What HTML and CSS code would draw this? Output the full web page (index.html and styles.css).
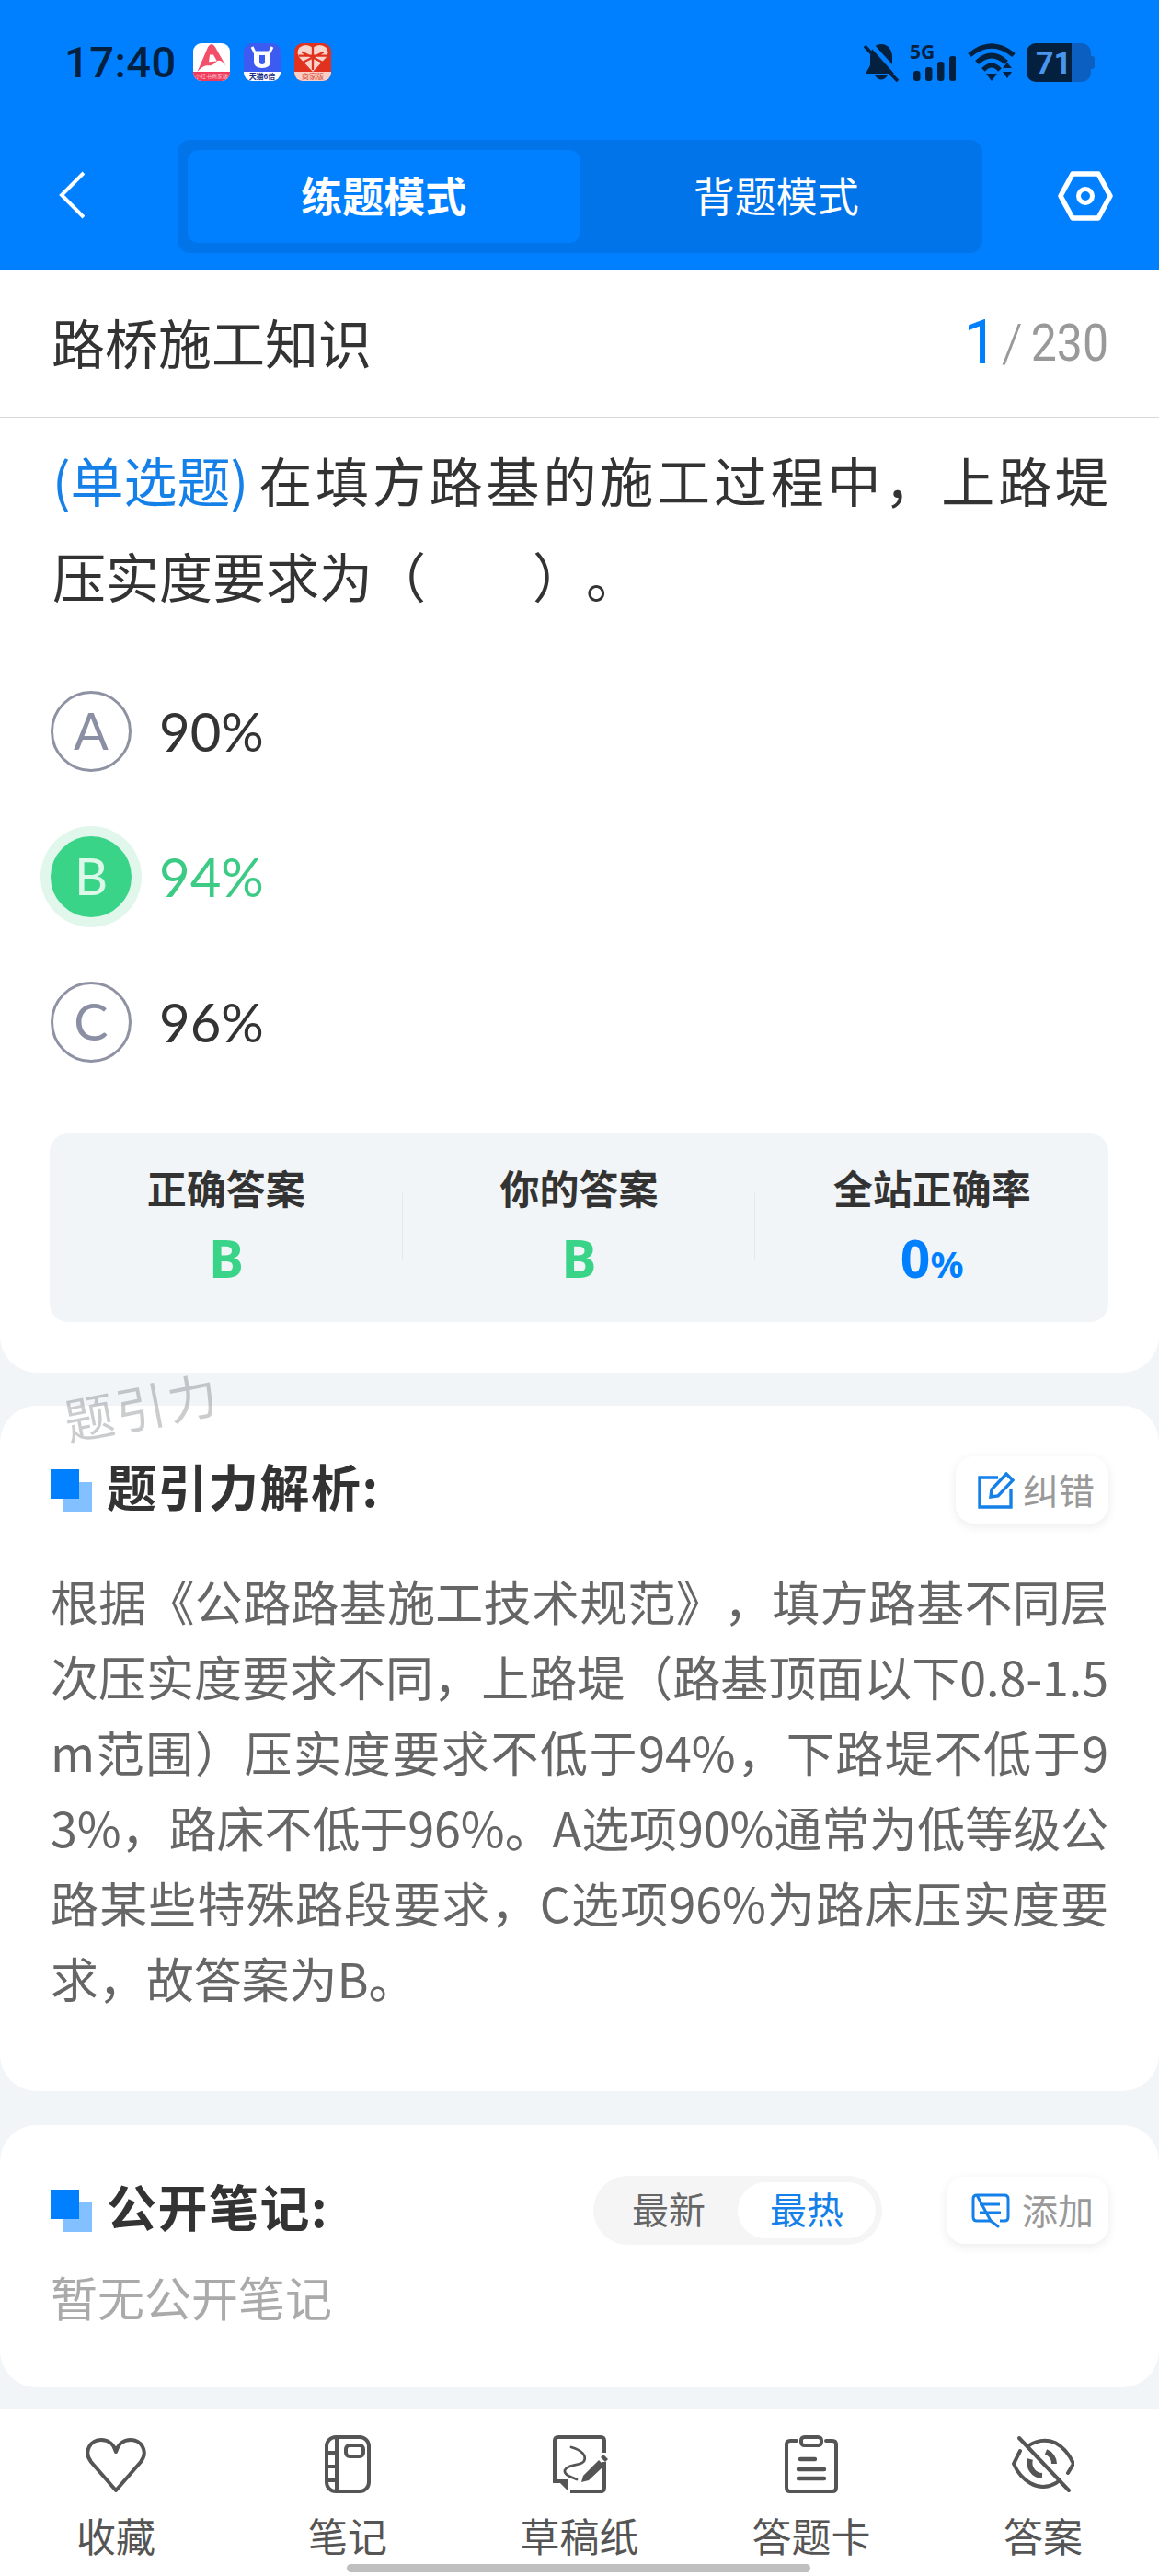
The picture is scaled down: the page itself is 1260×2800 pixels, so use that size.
FILE: index.html
```html
<!DOCTYPE html>
<html lang="zh-CN">
<head>
<meta charset="utf-8">
<title>练题模式</title>
<link rel="stylesheet" href="styles.css">
</head>
<body>
<div class="page">
  <header class="header">
    <div class="status">
      <span class="time">17:40</span>
      <div class="apps">
        <div class="app app-xhs">
          <svg viewBox="0 0 40 32" class="app-art"><path d="M4 32 L16 4 Q20 -2 24 4 L37 27 Q31 17 26 20 Q21 26 14 25 Q9 26 4 32Z" fill="#f2506a"/><path d="M18 13 L22 13 L26 20 L17 21Z" fill="#fff"/></svg>
          <span class="app-label app-label-red">小红书商家版</span>
        </div>
        <div class="app app-tm">
          <svg viewBox="0 0 40 31" class="app-art"><path d="M9 4 L12 10 H28 L31 4" fill="none" stroke="#fff" stroke-width="3"/><path d="M11 10 H29 V20 Q29 27 20 27 Q11 27 11 20Z" fill="#fff"/><path d="M17 13 H23 V20 Q23 23 20 23 Q17 23 17 20Z" fill="#3d5bf0"/></svg>
          <span class="app-label app-label-navy">天猫6倍</span>
        </div>
        <div class="app app-pdd">
          <svg viewBox="0 0 40 32" class="app-art"><path d="M20 32 L5 16 Q1 10 5 5 Q12 -1 20 5 Q28 -1 35 5 Q39 10 35 16Z" fill="#f7d5cd"/><path d="M20 2 V30 M8 10 L32 22 M32 10 L8 22 M4 14 H36" stroke="#e0321f" stroke-width="2.4"/></svg>
          <span class="app-label app-label-pink">商家版</span>
        </div>
      </div>
      <div class="sys">
        <svg class="ic-bell" viewBox="0 0 40 42"><path d="M20 1 C28 1 32 8 32 15 V24 L37 33 H3 L8 24 V15 C8 8 12 1 20 1Z" fill="#03203f"/><path d="M13 35 Q20 44 27 35Z" fill="#03203f"/><path d="M6 -2 L42 38" stroke="#0080ff" stroke-width="5"/><path d="M2 3 L38 41" stroke="#03203f" stroke-width="3.6"/></svg>
        <div class="signal">
          <span class="five-g">5G</span>
          <svg viewBox="0 0 50 42" class="ic-signal"><rect x="4" y="30" width="7.5" height="11" rx="3"/><rect x="17" y="26" width="7.5" height="15" rx="3"/><rect x="30" y="20" width="7.5" height="21" rx="3"/><rect x="43" y="14" width="7.5" height="27" rx="3"/></svg>
        </div>
        <svg class="ic-wifi" viewBox="0 0 53 42"><path d="M2 13 Q26 -7 50 13" fill="none" stroke="#03203f" stroke-width="5.5"/><path d="M10 21 Q26 6 42 21" fill="none" stroke="#03203f" stroke-width="5.5"/><path d="M17 29 Q26 19 35 29" fill="none" stroke="#03203f" stroke-width="5"/><path d="M20 33 H32 L26 41Z" fill="#03203f"/><path d="M38 27 L43 21 L48 27ZM38 31 H48 L43 38Z" fill="#03203f"/></svg>
        <div class="battery"><span class="bat-fill">71</span><span class="bat-rest"></span><span class="bat-tip"></span></div>
      </div>
    </div>
    <nav class="nav">
      <svg class="ic-back" viewBox="0 0 28 52"><path d="M27 2 L3 26 L27 50" fill="none" stroke="#fff" stroke-width="4"/></svg>
      <div class="seg">
        <div class="seg-item seg-on">练题模式</div>
        <div class="seg-item">背题模式</div>
      </div>
      <svg class="ic-hex" viewBox="0 0 60 54"><path d="M16 3 H44 L57 27 L44 51 H16 L3 27Z" fill="none" stroke="#fff" stroke-width="5.5" stroke-linejoin="round"/><circle cx="30" cy="27" r="7.5" fill="none" stroke="#fff" stroke-width="5"/></svg>
    </nav>
  </header>

  <main class="main">
    <div class="subject">
      <span class="subject-name">路桥施工知识</span>
      <span class="progress"><span class="prog-cur">1</span><span class="prog-sep">/</span><span class="prog-total">230</span></span>
    </div>
    <section class="card card-q">
      <div class="question">
        <p class="q-first"><span class="q-type">(单选题)</span><span class="q-rest">在填方路基的施工过程中，上路堤</span></p>
        <p class="q-second">压实度要求为（　　）。</p>
      </div>
      <ul class="options">
        <li class="option"><span class="opt-mark">A</span><span class="opt-text">90%</span></li>
        <li class="option option-ok"><span class="opt-mark">B</span><span class="opt-text">94%</span></li>
        <li class="option"><span class="opt-mark">C</span><span class="opt-text">96%</span></li>
      </ul>
      <div class="stats">
        <div class="stat"><div class="stat-label">正确答案</div><div class="stat-val stat-green">B</div></div>
        <div class="stat stat-line"><div class="stat-label">你的答案</div><div class="stat-val stat-green">B</div></div>
        <div class="stat stat-line"><div class="stat-label">全站正确率</div><div class="stat-val stat-blue">0<small class="stat-pct">%</small></div></div>
      </div>
    </section>

    <section class="card card-a">
      <span class="watermark">题引力</span>
      <div class="sec-head">
        <div class="sec-title"><span class="sq"></span><span class="sec-text">题引力解析:</span></div>
        <div class="chip">
          <svg class="ic-edit" viewBox="0 0 40 40"><path d="M22 6 H2 V38 H36 V18" fill="none" stroke="#1580e8" stroke-width="3.4"/><path d="M14 27 L15 19 L31 2 L38 9 L22 26Z" fill="none" stroke="#1580e8" stroke-width="3.4"/></svg>
          <span class="chip-text">纠错</span>
        </div>
      </div>
      <p class="analysis">根据《公路路基施工技术规范》，填方路基不同层次压实度要求不同，上路堤（路基顶面以下0.8-1.5m范围）压实度要求不低于94%，下路堤不低于93%，路床不低于96%。A选项90%通常为低等级公路某些特殊路段要求，C选项96%为路床压实度要求，故答案为B。</p>
    </section>

    <section class="card card-n">
      <div class="sec-head sec-head-n">
        <div class="sec-title"><span class="sq"></span><span class="sec-text">公开笔记:</span></div>
        <div class="toggle"><span class="tog-item">最新</span><span class="tog-item tog-on">最热</span></div>
        <div class="chip chip-add">
          <svg class="ic-note" viewBox="0 0 42 40"><path d="M6 3 H36 Q40 3 40 7 V27 Q40 31 36 31 H31 M21 31 H6 Q2 31 2 27 V7 Q2 3 6 3Z" fill="none" stroke="#1580e8" stroke-width="3"/><path d="M21 31 L29 37" fill="none" stroke="#1580e8" stroke-width="3" stroke-linecap="round"/><path d="M9 13 H31 M9 22 H32" stroke="#1580e8" stroke-width="3"/></svg>
          <span class="chip-text">添加</span>
        </div>
      </div>
      <p class="empty">暂无公开笔记</p>
    </section>
  </main>

  <footer class="tabbar">
    <div class="tab">
      <svg class="tab-ic" viewBox="0 0 68 63"><path d="M34 60 L7 29 C-2 17 7 5 18 5 C26 5 32 10 34 18 C36 10 42 5 50 5 C61 5 70 17 61 29Z" fill="none" stroke="#555" stroke-width="4" stroke-linejoin="round"/></svg>
      <span>收藏</span>
    </div>
    <div class="tab">
      <svg class="tab-ic" viewBox="0 0 68 63"><rect x="11" y="2" width="46" height="59" rx="10" fill="none" stroke="#555" stroke-width="4"/><path d="M22 2 V61 M11 19 H22 M11 34 H22 M11 49 H22" stroke="#555" stroke-width="4"/><rect x="32" y="11" width="19" height="12" rx="4" fill="none" stroke="#555" stroke-width="4"/></svg>
      <span>笔记</span>
    </div>
    <div class="tab">
      <svg class="tab-ic" viewBox="0 0 68 63"><path d="M20 50 L7 50 V6 Q7 2 11 2 H57 Q61 2 61 6 V19 M61 29 V57 Q61 61 57 61 H24" fill="none" stroke="#555" stroke-width="4"/><path d="M7 46 L22 61 V48 H7Z" fill="#555"/><path d="M25 13 C36 16 42 22 39 28 C35 34 21 31 18 38 C17 43 24 45 31 48" fill="none" stroke="#555" stroke-width="2.8" stroke-linecap="round"/><path d="M38 44 L55 27 L61 33 L44 49 L36 51Z" fill="#555"/><path d="M57 24 L60 21 L65 26 L62 29Z" fill="#555"/></svg>
      <span>草稿纸</span>
    </div>
    <div class="tab">
      <svg class="tab-ic" viewBox="0 0 68 63"><path d="M18 6 H11 Q7 6 7 10 V57 Q7 61 11 61 H57 Q61 61 61 57 V10 Q61 6 57 6 H50" fill="none" stroke="#555" stroke-width="4" stroke-linecap="round"/><rect x="23" y="2" width="22" height="9" rx="3.5" fill="none" stroke="#555" stroke-width="4"/><path d="M22 26 H38 M20 37 H48 M20 47 H48" stroke="#555" stroke-width="4.4" stroke-linecap="round"/></svg>
      <span>答题卡</span>
    </div>
    <div class="tab">
      <svg class="tab-ic" viewBox="0 0 68 63"><path d="M9 17 L2 31 Q8 45 20 52 Q34 60 48 52 L52 49 M17 12 Q32 2 47 8 Q60 15 67 31 L61 41" fill="none" stroke="#555" stroke-width="4" stroke-linecap="round" stroke-linejoin="round"/><path d="M8 3 L62 60" stroke="#555" stroke-width="4" stroke-linecap="round"/><path d="M37 18 A14 14 0 0 1 46 31 M20 26 A14 14 0 0 0 33 44" fill="none" stroke="#555" stroke-width="6"/></svg>
      <span>答案</span>
    </div>
  </footer>
  <div class="home-bar"></div>
</div>
</body>
</html>
```
FILE: styles.css
```css
* { box-sizing: border-box; }
html, body { margin: 0; padding: 0; }
body { font-family: "Noto Sans CJK SC", "Noto Sans", sans-serif; background: #f2f5f8; color: #333; text-spacing-trim: space-all; }
p, ul { margin: 0; padding: 0; }
li { list-style: none; }

.page { position: relative; width: 1260px; height: 2800px; display: flex; flex-direction: column; overflow: hidden; background: #f2f5f8; }

.header { height: 294px; flex: none; background: #0080ff; }
.status { height: 136px; padding: 47px 70px 0 70px; display: flex; align-items: flex-start; }
.time { font: 500 47px/42px Roboto, sans-serif; color: #03203f; width: 119px; letter-spacing: 0.5px; }
.apps { display: flex; gap: 15px; margin-left: 21px; }
.app { width: 40px; height: 41px; border-radius: 9px; position: relative; overflow: hidden; display: flex; flex-direction: column; }
.app-art { width: 40px; height: 31px; flex: none; }
.app-label { flex: 1; font-size: 7px; line-height: 10px; text-align: center; white-space: nowrap; overflow: hidden; }
.app-xhs { background: #fff; }
.app-label-red { background: #ef3a5d; color: #ffc5d0; font-size: 6px; }
.app-tm { background: #3d5bf0; }
.app-label-navy { background: #fff; color: #1a2e86; font-size: 8px; font-weight: 700; }
.app-pdd { background: #e0321f; }
.app-label-pink { background: #f9cfc6; color: #d8432e; font-size: 8px; }

.sys { margin-left: auto; display: flex; align-items: flex-start; }
.ic-bell { width: 40px; height: 42px; display: block; }
.signal { position: relative; width: 50px; height: 42px; margin-left: 11px; }
.five-g { position: absolute; left: 0; top: -2px; font: 700 21px/22px "Noto Sans", sans-serif; color: #03203f; }
.ic-signal { position: absolute; left: 0; top: 0; width: 50px; height: 42px; fill: #03203f; }
.ic-wifi { width: 53px; height: 42px; display: block; margin-left: 13px; }
.battery { position: relative; display: flex; width: 74px; height: 42px; margin-left: 11px; }
.bat-fill { width: 49px; height: 42px; background: #03203f; color: #4a95ee; border-radius: 10px 0 0 10px; font: 700 34px/42px Roboto, sans-serif; text-align: right; }
.bat-rest { width: 21px; height: 42px; background: #0a5fc0; border-radius: 0 10px 10px 0; }
.bat-tip { width: 4px; height: 14px; margin-top: 14px; background: #0a5fc0; border-radius: 0 3px 3px 0; }

.nav { height: 139px; padding: 16px 50px 0 64px; display: flex; align-items: flex-start; }
.ic-back { width: 28px; height: 52px; margin-top: 34px; flex: none; }
.seg { width: 875px; height: 123px; margin-left: 101px; padding: 11px; display: flex; background: #0074e8; border-radius: 14px; flex: none; }
.seg-item { flex: 1; border-radius: 12px; color: #fff; font-size: 45px; line-height: 98px; height: 101px; text-align: center; }
.seg-on { background: #0080ff; font-weight: 700; }
.ic-hex { width: 60px; height: 54px; margin: 34px 0 0 auto; flex: none; }

.main { flex: 1; min-height: 0; }
.subject { height: 160px; background: #fff; border-bottom: 1px solid #d8d8d8; padding: 0 55px 0 56px; display: flex; align-items: center; justify-content: space-between; }
.subject-name { font-size: 58px; line-height: 80px; color: #333; margin-bottom: 6px; }
.progress { display: flex; align-items: center; font-family: Roboto, sans-serif; line-height: 70px; color: #999; margin-top: -2px; }
.prog-cur { font-size: 66px; color: #0080ff; }
.prog-sep { font-size: 58px; font-weight: 300; margin: 0 9px 0 4px; }
.prog-total { font-size: 50px; transform: scaleY(1.1); }

.card { position: relative; background: #fff; border-radius: 40px; margin-top: 36px; }
.card-q { margin-top: 0; border-radius: 0 0 40px 40px; height: 1038px; padding: 15px 55px 0 54px; }
.question { font-size: 58px; line-height: 104px; padding-left: 3px; color: #333; }
.q-first { display: flex; }
.q-type { flex: none; color: #1480e8; margin-right: 11px; }
.q-rest { flex: 1; text-align: justify; text-align-last: justify; }
.options { margin-top: 39px; }
.option { height: 158px; display: flex; align-items: center; padding-left: 1px; }
.opt-mark { width: 88px; height: 88px; border-radius: 50%; border: 3px solid #8e92a3; color: #8a8fa3; font: 400 56px/80px Lato, sans-serif; text-align: center; flex: none; }
.opt-text { font: 400 58px/1 Lato, sans-serif; color: #333; margin-left: 30px; }
.option-ok .opt-mark { background: #3ad489; border-color: #3ad489; color: #dcf8e9; box-shadow: 0 0 0 11px #e2f7ec; }
.option-ok .opt-text { color: #3ccb85; }

.stats { margin-top: 42px; height: 205px; background: #f2f5f8; border-radius: 20px; display: flex; position: relative; }
.stat { flex: 1; padding-top: 30px; text-align: center; position: relative; }
.stat-line::before { content: ""; position: absolute; left: -1px; top: 65px; width: 1px; height: 73px; background: #e4e8ec; }
.stat-label { font-size: 43px; line-height: 56px; font-weight: 700; color: #333; }
.stat-val { font: 700 57px/62px "Noto Sans", sans-serif; margin-top: 18px; }
.stat-green { color: #3ad489; }
.stat-blue { color: #0080ff; }
.stat-pct { font-size: 40px; }

.card-a { height: 745px; padding: 55px 55px 0 55px; }
.watermark { position: absolute; left: 70px; top: -19px; font-size: 54px; line-height: 70px; letter-spacing: 3px; font-weight: 400; color: rgba(80, 86, 92, 0.3); transform: rotate(-11deg); transform-origin: left center; }
.sec-head { display: flex; align-items: center; justify-content: space-between; height: 73px; }
.sec-title { display: flex; align-items: center; font-size: 54px; font-weight: 700; color: #333; letter-spacing: 1.5px; }
.sec-text { line-height: 70px; margin-bottom: 9px; }
.sq { position: relative; width: 45px; height: 46px; background: linear-gradient(#83c0ff, #83c0ff) 14px 14px / 31px 32px no-repeat; margin-right: 16px; }
.sq::before { content: ""; position: absolute; left: 0; top: 0; width: 31px; height: 32px; background: #0080ff; }
.chip { height: 73px; width: 166px; border-radius: 20px; background: #fff; box-shadow: 0 3px 12px rgba(0, 0, 0, 0.08); display: flex; align-items: center; padding-left: 24px; color: #999; font-size: 39px; gap: 9px; }
.chip-text { line-height: 50px; margin-bottom: 4px; }
.ic-edit { width: 40px; height: 40px; flex: none; }
.ic-note { width: 42px; height: 40px; flex: none; }
.analysis { margin-top: 43px; font-size: 52px; line-height: 82px; letter-spacing: -0.1px; color: #666; text-align: justify; word-break: break-all; }

.card-n { height: 285px; margin-top: 37px; padding: 55px 55px 0 55px; }
.sec-head-n { height: 75px; }
.sec-head-n .sec-title { flex: 1; }
.toggle { width: 314px; height: 75px; padding: 7px; border-radius: 38px; background: #f5f5f5; display: flex; font-size: 40px; color: #666; }
.tog-item { flex: none; width: 150px; height: 61px; line-height: 57px; text-align: center; border-radius: 31px; }
.tog-on { background: #fff; color: #1580e8; }
.chip-add { width: 176px; margin-left: 70px; padding-left: 27px; gap: 13px; }
.empty { margin-top: 16px; font-size: 51px; line-height: 80px; color: #aaa; }

.tabbar { height: 182px; flex: none; background: #fff; display: flex; padding-top: 29px; }
.tab { flex: 1; display: flex; flex-direction: column; align-items: center; font-size: 43px; line-height: 52px; color: #555; }
.tab-ic { width: 68px; height: 63px; display: block; margin-bottom: 19px; }
.home-bar { position: absolute; left: 377px; bottom: 4px; width: 504px; height: 9px; border-radius: 5px; background: #bfbfbf; }
```
